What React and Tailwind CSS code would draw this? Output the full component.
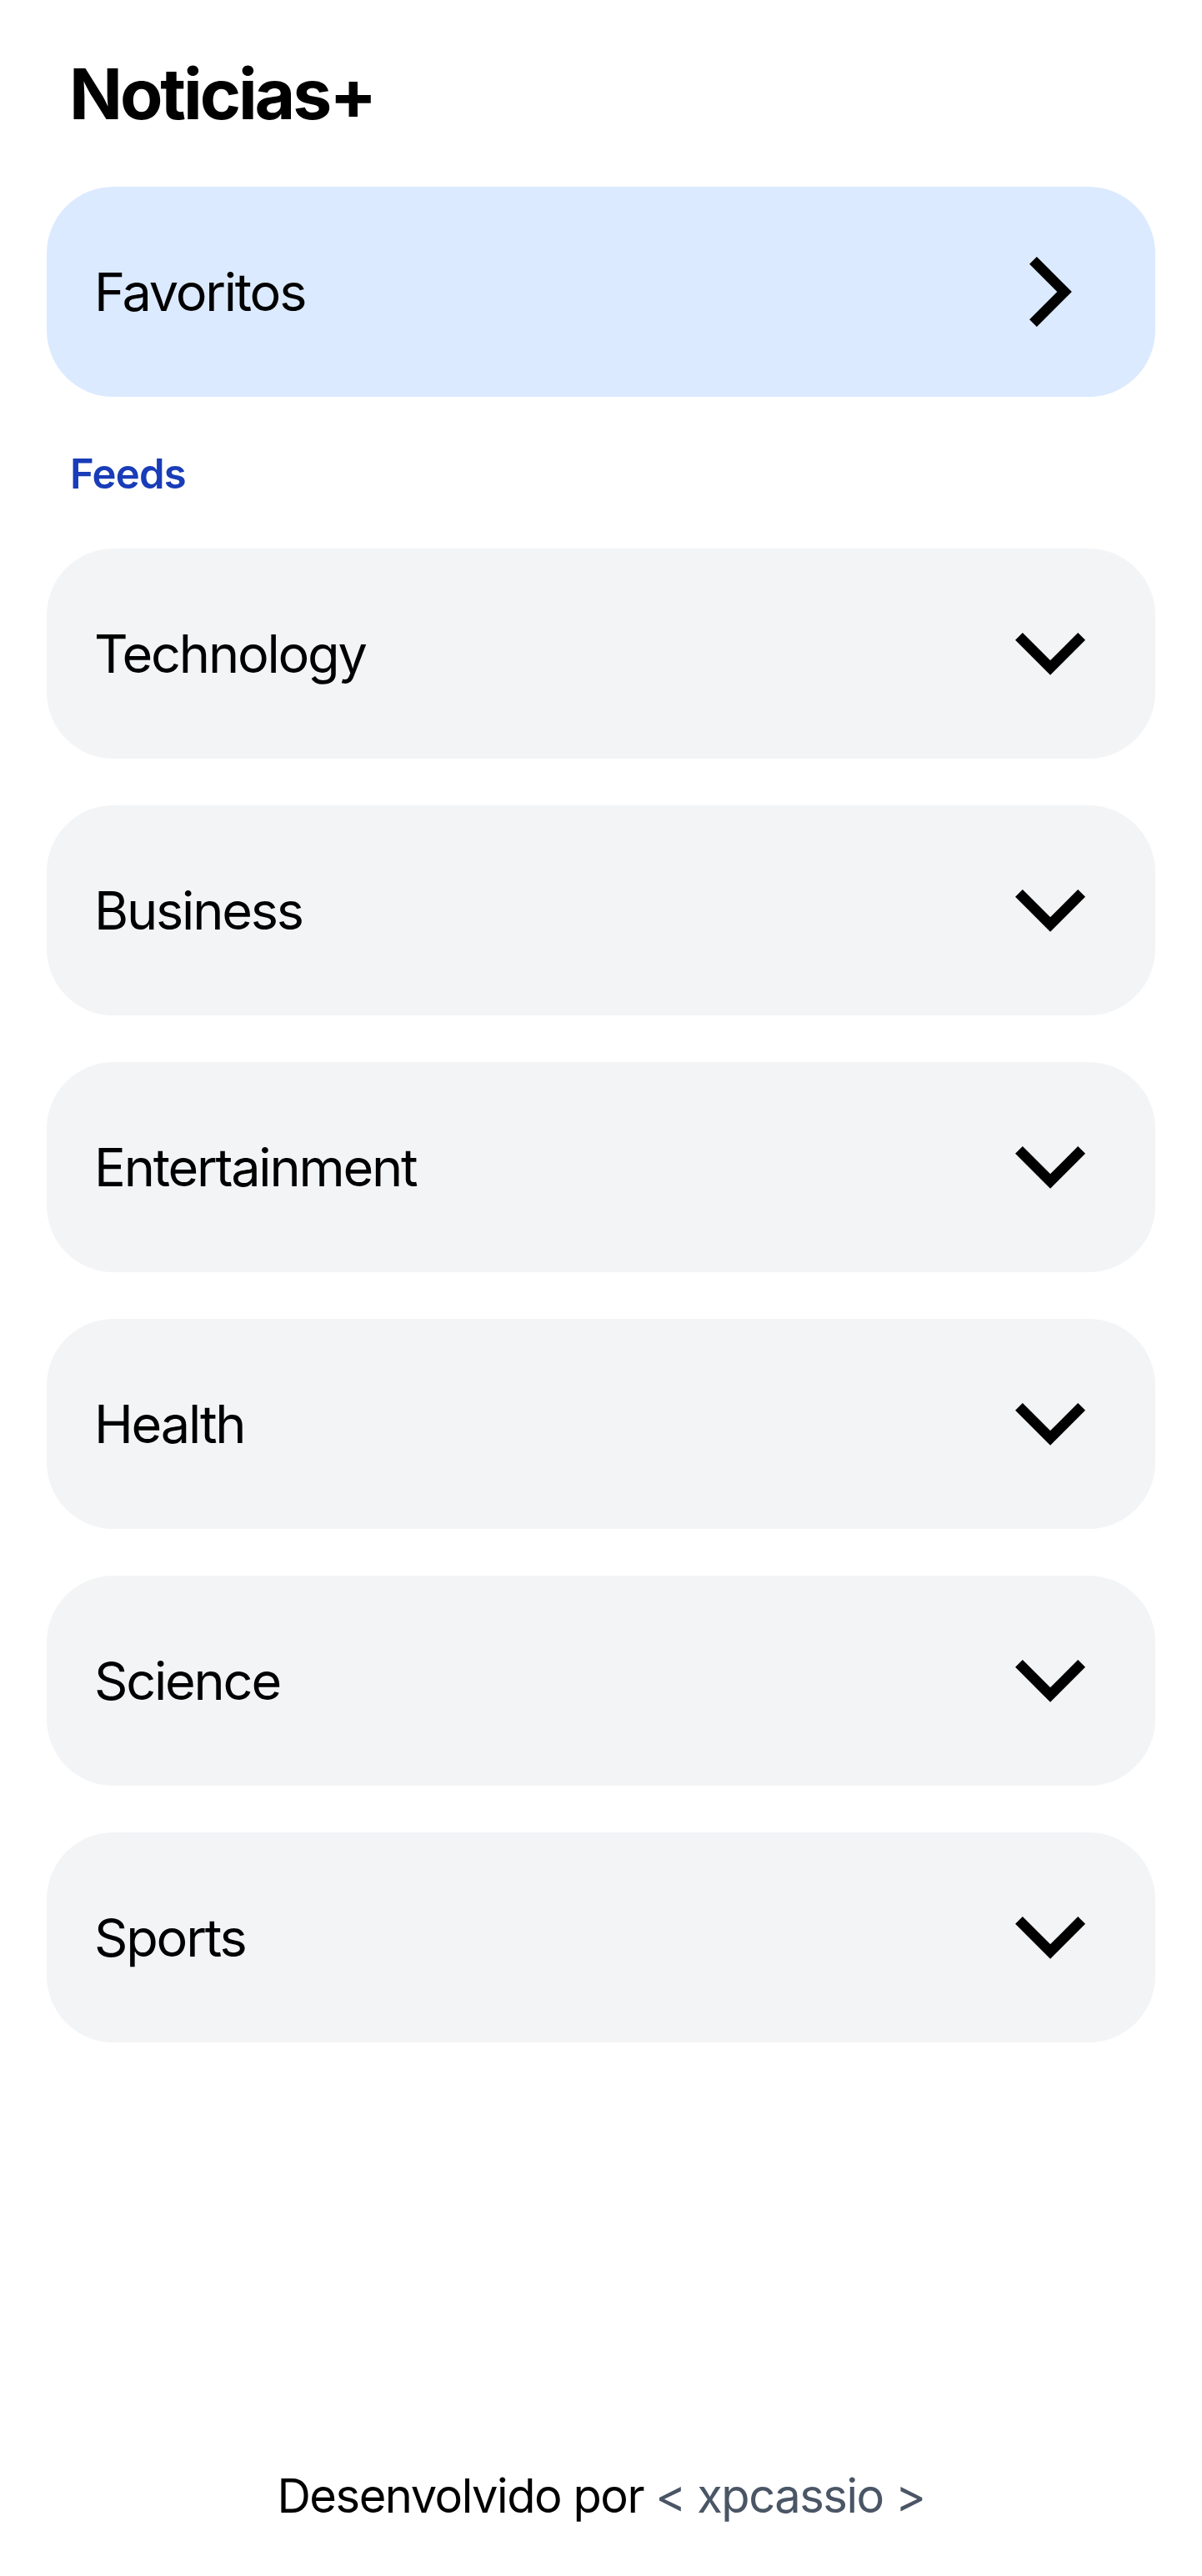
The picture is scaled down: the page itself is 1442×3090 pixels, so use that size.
import React from "react";

const feeds = ["Technology", "Business", "Entertainment", "Health", "Science", "Sports"];

const ChevronDown = () => (
  <svg width="84" height="51" viewBox="0 0 84 51" fill="none">
    <polyline
      points="4.4,4.4 42,42 79.6,4.4"
      stroke="#000"
      strokeWidth="12.5"
      strokeLinecap="butt"
      strokeLinejoin="miter"
    />
  </svg>
);

const ChevronRight = () => (
  <svg width="51" height="84" viewBox="0 0 51 84" fill="none">
    <polyline
      points="4.4,4.4 42,42 4.4,79.6"
      stroke="#000"
      strokeWidth="12.5"
      strokeLinecap="butt"
      strokeLinejoin="miter"
    />
  </svg>
);

const Row = ({ label, icon, bgClass }) => (
  <button
    type="button"
    className={`flex h-[252px] w-full items-center justify-between rounded-[80px] pl-[57px] pr-[84px] text-left ${bgClass}`}
  >
    <span className="text-[63px] font-normal leading-none tracking-[-0.035em] text-black">
      {label}
    </span>
    <span className="flex w-[84px] items-center justify-center">{icon}</span>
  </button>
);

export default function App() {
  return (
    <div
      className="flex min-h-screen flex-col bg-white px-[56px]"
      style={{ fontFamily: "Inter, 'Noto Sans', sans-serif" }}
    >
      <h1 className="pl-[27px] pt-[71px] text-[84px] font-bold leading-none tracking-[-0.037em] text-black">
        Noticias+
      </h1>

      <div className="mt-[69px]">
        <Row label="Favoritos" icon={<ChevronRight />} bgClass="bg-blue-100" />
      </div>

      <h2 className="mt-[68px] pl-[28px] text-[49px] font-semibold leading-none tracking-[-0.015em] text-blue-800">
        Feeds
      </h2>

      <div className="mt-[65px] flex flex-col gap-[56px]">
        {feeds.map((feed) => (
          <Row key={feed} label={feed} icon={<ChevronDown />} bgClass="bg-gray-100" />
        ))}
      </div>

      <footer className="mt-auto pb-[68px] text-center text-[56px] leading-none tracking-[-0.026em] text-black">
        Desenvolvido por <span className="text-gray-600">&lt; xpcassio &gt;</span>
      </footer>
    </div>
  );
}
